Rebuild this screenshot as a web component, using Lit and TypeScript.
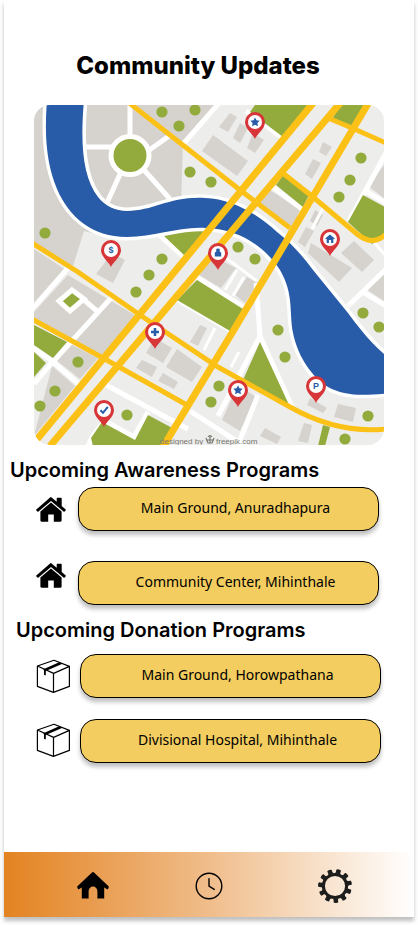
import { LitElement, html, svg, css } from "lit";
import { customElement, property } from "lit/decorators.js";

type Glyph = "star" | "dollar" | "person" | "home" | "plus" | "check" | "parking";

const BUILDINGS = [
  "230,113 237,117 228,132 219,127", "240,123 248,128 240,143 233,138",
  "253,133 264,140 255,153 247,148", "213,135 248,161 237,176 202,151",
  "323,142 332,147 326,156 319,152",
  "313,159 321,163 312,179 305,174", "270,190 300,210 292,228 260,203",
  "315,210 323,215 317,226 310,221", "306,227 314,231 305,247 298,242",
  "311,243 352,268 339,282 308,253", "354,241 374,260 362,272 341,253",
  "112,253 125,260 113,283 96,274", "214,257 236,268 221,288 199,275",
  "247,277 258,283 245,303 235,295", "200,325 207,328 198,346 190,342",
  "155,338 172,348 163,363 146,353", "177,349 202,367 192,382 166,367",
  "142,360 157,367 152,377 136,368", "163,373 178,382 174,389 158,381",
  "238,385 256,397 240,431 222,420", "265,428 281,437 277,444 260,436",
  "304,423 312,425 308,443 298,441", "310,398 327,408 323,413 307,405",
  "338,404 356,408 353,422 334,417", "384,271 384,301 366,289",
  "384,165 384,198 368,186",
];

const BLOCKS = [
  "34,105 216,105 183,141 181,205 120,240 84,231 73,266 34,243",
  "34,249 66,270 34,306", "34,312 68,275 138,317 103,357 34,318",
  "70,344 98,358 80,379 56,360", "52,366 75,386 34,436",
];

const PARKS = [
  "255,105 308,105 283,137 250,112", "341,105 364,105 352,127 332,119",
  "283,175 309,195 303,207 276,185", "363,195 385,207 385,236 372,244 348,222",
  "163,235 183,231 206,231 184,255", "197,280 243,309 230,331 177,300",
  "34,325 67,342 53,358 34,345", "34,352 46,363 34,377",
  "102,422 135,440 148,415 176,430 168,446 93,446 91,438",
  "260,342 290,407 243,380", "323,425 330,427 325,446 318,446",
];

const STREETS = [
  "M219 103L184 143", "M246 111L284 139", "M273 187L302 209", "M386 153L349 221",
  "M364 190L386 203", "M157 233L185 258", "M112 297L50 365L34 384", "M84 300L97 311",
  "M32 347L52 361L80 385", "M68 268L32 309", "M106 385L188 429", "M176 299L232 331",
  "M190 411L232 438L246 446", "M256 283L260 336L218 416", "M260 336L293 409",
  "M258 395L240 440", "M386 269L348 306", "M363 292L386 306", "M104 421L92 437L88 446",
  "M103 420L134 437L148 412", "M197 277L243 307",
];

const ALLEYS = [
  "M214 249L257 281", "M237 270L225 290", "M244 277L233 296", "M215 328L204 350",
  "M239 352L231 367", "M324 206L312 229", "M372 240L386 256",
];

const RIVER =
  "M47 100C44 138 47 165 57 189C69 217 92 237 127 237C155 237 180 226 206 228C240 229 265 247 280 270C294 294 289 312 293 333C298 357 312 377 328 387C344 396 363 396 390 393V359C370 343 357 325 348 313L313 270C303 256 290 242 277 232C256 213 232 199 205 198C170 196 154 211 127 211C116 211 105 206 98 197C83 177 80 145 84 100Z";

const HIGHWAYS = ["M314 102L34 443", "M341 102L50 446", "M369 102L312 198L235 328L163 447"];

const AVENUES = [
  "M128 102L240 190L290 228", "M328 118L352 128L386 143",
  "M284 174L313 197L357 234Q373 247 386 234",
  "M32 243L78 272L140 315L218 367L290 407Q338 434 386 429",
  "M32 319L103 358L187 405",
];

const TREES = [
  [162, 112], [195, 110], [179, 126], [190, 172], [211, 182], [45, 233], [162, 259],
  [149, 275], [361, 158], [350, 180], [339, 197], [238, 247], [255, 259], [136, 292],
  [78, 362], [55, 391], [40, 406], [127, 415], [211, 402], [363, 313], [379, 327],
  [278, 330], [285, 357], [219, 386], [368, 416], [345, 439],
];

const PINS: [number, number, Glyph][] = [
  [255, 122, "star"], [111, 250, "dollar"], [218, 253, "person"], [330, 239, "home"],
  [155, 332, "plus"], [104, 410, "check"], [238, 390, "star"], [316, 386, "parking"],
];

const glyphs = {
  star: svg`<path class="ink" d="M0-4.6L1.5-1.8L4.7-1.3L2.4 1L2.9 4.2L0 2.8L-2.9 4.2L-2.4 1L-4.7-1.3L-1.5-1.8Z"/>`,
  dollar: svg`<text class="letter" y="3">$</text>`,
  parking: svg`<text class="letter" y="3">P</text>`,
  person: svg`<path class="ink" d="M-1.8-3.6Q-1.8-4.6 0-4.6Q1.8-4.6 1.8-3.6V-1H2.4Q3.2-1 3.2 0V3.6H-3.2V0Q-3.2-1-2.4-1H-1.8Z"/>`,
  home: svg`<path class="ink" d="M0-4.6L4.8-.6L4 .3L3.3-.2V4H1.1V1H-1.1V4H-3.3V-.2L-4 .3L-4.8-.6Z"/>`,
  plus: svg`<path class="ink" d="M-1.3-4H1.3V-1.3H4V1.3H1.3V4H-1.3V1.3H-4V-1.3H-1.3Z"/>`,
  check: svg`<path class="tick" d="M-3.6 .2L-1 2.8L3.8-3.2"/>`,
};

@customElement("city-map")
export class CityMap extends LitElement {
  static styles = css`
    :host { display: block; }
    svg { display: block; width: 100%; height: auto; border-radius: 16px; }
    .ground { fill: #ededec; }
    .block { fill: #d6d3ce; }
    .park, .tree { fill: #93ab3d; }
    .street { fill: none; stroke: #fff; stroke-width: 5; }
    .alley { fill: none; stroke: #fff; stroke-width: 3; }
    .river { fill: #285ba8; stroke: #fff; stroke-width: 7; paint-order: stroke; }
    .highway { fill: none; stroke: #fcc116; stroke-width: 7; }
    .avenue { fill: none; stroke: #fcc116; stroke-width: 5; }
    .plaza { fill: #93ab3d; stroke: #fff; stroke-width: 5; }
    .lane { fill: #ededec; }
    .pin { fill: #d83538; }
    .face { fill: #fff; }
    .ink { fill: #285ba8; }
    .tick { fill: none; stroke: #285ba8; stroke-width: 2; }
    .letter { fill: #285ba8; font: 700 9px "Liberation Sans", sans-serif; text-anchor: middle; }
    .credit { fill: #77776f; font: 8px "Liberation Sans", sans-serif; }
    .mark { fill: none; stroke: #77776f; stroke-width: 1.2; }
  `;

  render() {
    return html`
      <svg viewBox="34 105 350 340" role="img" aria-label="Map of program locations">
        <rect class="ground" x="34" y="105" width="350" height="340" />
        ${BLOCKS.map((p) => svg`<polygon class="block" points=${p} />`)}
        ${BUILDINGS.map((p) => svg`<polygon class="block" points=${p} />`)}
        ${ALLEYS.map((d) => svg`<path class="alley" d=${d} />`)}
        ${STREETS.map((d) => svg`<path class="street" d=${d} />`)}
        ${PARKS.map((p) => svg`<polygon class="park" points=${p} />`)}
        <path class="street" d="M130 104V136M84 147H112M148 151L169 136M121 172L106 205M144 170L170 199" />
        <circle class="plaza" cx="130" cy="155.5" r="19" />
        <path class="plaza" d="M72 290L84 299L70 311L59 301Z" />
        <path class="river" d=${RIVER} />
        <path class="lane" d="M314 105H338L257 201L242 188Z" />
        ${AVENUES.map((d) => svg`<path class="avenue" d=${d} />`)}
        ${HIGHWAYS.map((d) => svg`<path class="highway" d=${d} />`)}
        ${TREES.map(([x, y]) => svg`<circle class="tree" cx=${x} cy=${y} r="5.6" />`)}
        ${PINS.map(
          ([x, y, glyph]) => svg`
            <g transform="translate(${x} ${y})">
              <path class="pin" d="M0 17C-2 12-10 7-10 0A10 10 0 0 1 10 0C10 7 2 12 0 17Z" />
              <circle class="face" r="7" />
              ${glyphs[glyph]}
            </g>`
        )}
        <text class="credit" x="160" y="444">designed by</text>
        <path class="mark" d="M206 438L208 443H212L214 438M208 437Q210 434 212 437M206 440H214M210 436V443" />
        <text class="credit" x="216" y="444">freepik.com</text>
      </svg>
    `;
  }
}

const houseIcon = html`
  <svg class="house" viewBox="0 0 30 25" aria-hidden="true">
    <path d="M15 0L20.7 4.8V1.4Q20.7.7 21.4.7H25Q25.7.7 25.7 1.4V9L29.7 12.4Q30.1 12.8 29.8 13.2L28.6 14.6Q28.2 15 27.8 14.7L15 4L2.2 14.7Q1.8 15 1.4 14.6L.2 13.2Q-.1 12.8 .3 12.4L13.8.7Q15-.2 15 0Z" />
    <path d="M15 5.6L25.6 14.4V23.6Q25.6 24.7 24.5 24.7H17.8V17.4H12.2V24.7H5.5Q4.4 24.7 4.4 23.6V14.4Z" />
  </svg>
`;

const boxIcon = html`
  <svg class="box" viewBox="0 0 34 34" aria-hidden="true">
    <path class="edge" d="M1.4 7L18 1.2L33.4 7.4V27.4L17.4 33.4L1.4 27.4ZM1.4 7L17.6 14.4L33.4 7.4M17.5 14.4V33.4" />
    <path d="M7.3 10.2L23.2 3.3L26.5 4.8L9.8 12V16.6L8 15.8V11.6Z" />
  </svg>
`;

const GEAR_TEETH = Array.from({ length: 11 }, (_, i) => (i * 360) / 11 + 13);

@customElement("program-list")
export class ProgramList extends LitElement {
  @property() heading = "";
  @property() kind: "awareness" | "donation" = "awareness";
  @property({ attribute: false }) places: string[] = [];

  static styles = css`
    :host { display: block; }
    h2 { margin: 0; font: 600 20px/24px Inter, sans-serif; color: #000; }
    .list { display: flex; align-items: flex-start; }
    .icons, .places { display: flex; flex-direction: column; }
    .places { flex: 1; }
    svg { display: block; fill: #000; }
    .house { width: 30px; height: 25px; }
    .box { width: 34px; height: 34px; }
    .edge { fill: none; stroke: #000; stroke-width: 1.2; stroke-linejoin: round; }
    button {
      height: 44px; padding: 0 0 2px 14px; border: 1px solid #000; border-radius: 16px;
      background: #f3cd5f; color: #000; font: 14px/20px "Noto Sans", sans-serif;
      box-shadow: 0 4px 4px rgb(0 0 0 / 25%); cursor: pointer;
    }
    .awareness h2 { margin: 0 6px 5px; }
    .awareness .list { padding: 0 35px 0 32px; gap: 12px; }
    .awareness .icons { padding-top: 10px; gap: 41px; }
    .awareness .places { gap: 30px; }
    .donation h2 { margin: 0 12px 12px; }
    .donation .list { padding: 0 33px 0 32px; gap: 10px; }
    .donation .icons { padding-top: 5px; gap: 30px; }
    .donation .places { gap: 21px; }
  `;

  render() {
    const icon = this.kind === "awareness" ? houseIcon : boxIcon;
    return html`
      <section class=${this.kind}>
        <h2>${this.heading}</h2>
        <div class="list">
          <div class="icons">${this.places.map(() => icon)}</div>
          <div class="places">${this.places.map((p) => html`<button type="button">${p}</button>`)}</div>
        </div>
      </section>
    `;
  }
}

@customElement("app-root")
export class AppRoot extends LitElement {
  static styles = css`
    :host { display: block; }
    .screen {
      display: flex; flex-direction: column; box-sizing: border-box;
      min-height: calc(100vh - 8px); margin: 0 4px 8px;
      background: #fff; box-shadow: 0 4px 4px rgb(0 0 0 / 25%);
    }
    h1 {
      margin: 50px 22px 24px 0; text-align: center;
      font: 800 24px/31px Inter, sans-serif; color: #000;
    }
    main { display: flex; flex-direction: column; gap: 13px; padding-bottom: 24px; }
    city-map { margin: 0 30px; }
    nav {
      display: grid; grid-template-columns: 29fr 29fr 34fr; align-items: center; justify-items: center;
      height: 65px; margin-top: auto; padding: 0 11px 0 31px;
      background: linear-gradient(90deg, #e38321, #f0bd8b 50%, #fff);
    }
    nav button {
      display: grid; place-items: center; width: 48px; height: 48px; padding: 0;
      border: 0; background: none; cursor: pointer;
    }
    nav svg { display: block; width: 36px; height: 36px; }
    .line { fill: none; stroke: #000; stroke-width: 1.4; stroke-linecap: round; }
    .gear { fill: #1d1d1b; }
    .rim { fill: none; stroke: #1d1d1b; stroke-width: 3; }
  `;

  render() {
    return html`
      <div class="screen">
        <h1>Community Updates</h1>
        <main>
          <city-map></city-map>
          <program-list
            kind="awareness"
            heading="Upcoming Awareness Programs"
            .places=${["Main Ground, Anuradhapura", "Community Center, Mihinthale"]}
          ></program-list>
          <program-list
            kind="donation"
            heading="Upcoming Donation Programs"
            .places=${["Main Ground, Horowpathana", "Divisional Hospital, Mihinthale"]}
          ></program-list>
        </main>
        <nav aria-label="Main">
          <button type="button" aria-label="Home">
            <svg viewBox="-18 -18 36 36">
              <path d="M-1-12.4Q0-13.4 1-12.4L15.8 1.6Q16 3 14.6 4.4L11.2 2.6V13.6H4.4V6A4.4 4.4 0 0 0-4.4 6V13.6H-11.2V2.6L-14.6 4.4Q-16 3-15.8 1.6Z" />
            </svg>
          </button>
          <button type="button" aria-label="History">
            <svg viewBox="-18 -18 36 36">
              <circle class="line" cy="1" r="12.8" />
              <path class="line" d="M0-6.4V1L5.2 4.4" />
            </svg>
          </button>
          <button type="button" aria-label="Settings">
            <svg viewBox="-18 -18 36 36">
              <circle class="rim" cy="1" r="11.6" />
              ${GEAR_TEETH.map(
                (a) => svg`<path class="gear" transform="translate(0 1) rotate(${a})" d="M-3-12.4Q-1.7-13.4-2.4-16.2Q-2-17 0-17Q2-17 2.4-16.2Q1.7-13.4 3-12.4Z" />`
              )}
            </svg>
          </button>
        </nav>
      </div>
    `;
  }
}
